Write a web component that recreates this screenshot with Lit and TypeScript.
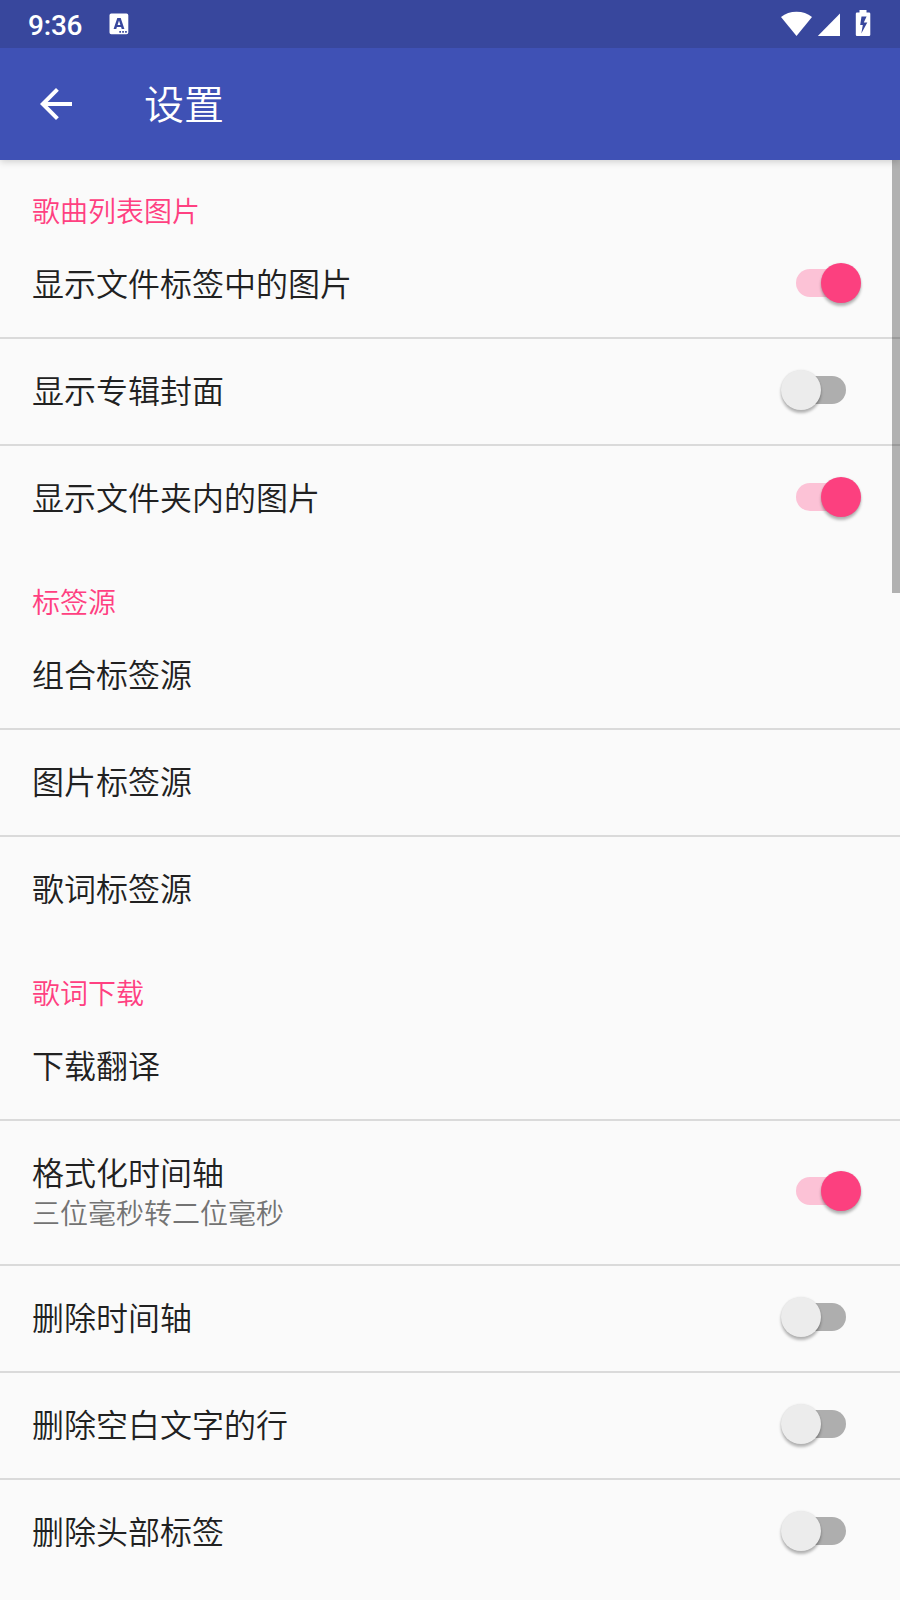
import { LitElement, html, css, nothing } from "lit";
import { customElement, property } from "lit/decorators.js";

interface Pref {
  title: string;
  summary?: string;
  on?: boolean;
}

interface Group {
  name: string;
  items: Pref[];
}

const GROUPS: Group[] = [
  {
    name: "歌曲列表图片",
    items: [
      { title: "显示文件标签中的图片", on: true },
      { title: "显示专辑封面", on: false },
      { title: "显示文件夹内的图片", on: true },
    ],
  },
  {
    name: "标签源",
    items: [{ title: "组合标签源" }, { title: "图片标签源" }, { title: "歌词标签源" }],
  },
  {
    name: "歌词下载",
    items: [
      { title: "下载翻译" },
      { title: "格式化时间轴", summary: "三位毫秒转二位毫秒", on: true },
      { title: "删除时间轴", on: false },
      { title: "删除空白文字的行", on: false },
      { title: "删除头部标签", on: false },
    ],
  },
];

@customElement("toggle-switch")
export class ToggleSwitch extends LitElement {
  @property({ type: Boolean, reflect: true }) on = false;

  static styles = css`
    :host {
      display: flex;
      align-items: center;
      width: 50px;
      height: 28px;
      border-radius: 14px;
      background: #aeaeae;
    }
    .thumb {
      flex: none;
      width: 40px;
      height: 40px;
      margin-left: -15px;
      border-radius: 50%;
      background: #ececec;
      box-shadow: 0 3px 3px rgba(0, 0, 0, 0.28), 0 0 2px rgba(0, 0, 0, 0.1);
    }
    :host([on]) {
      background: #fcc2d6;
    }
    :host([on]) .thumb {
      margin-left: 25px;
      background: #fc407f;
    }
  `;

  render() {
    return html`<div class="thumb"></div>`;
  }
}

@customElement("app-root")
export class AppRoot extends LitElement {
  static styles = css`
    :host {
      display: flex;
      flex-direction: column;
      position: relative;
      width: 900px;
      height: 1600px;
      overflow: hidden;
      background: #fafafa;
      color: #212121;
      font-family: "Noto Sans CJK SC", sans-serif;
      font-weight: 350;
    }
    svg {
      display: block;
      fill: #fff;
    }
    .status {
      flex: none;
      display: flex;
      align-items: flex-start;
      height: 48px;
      box-sizing: border-box;
      padding: 0 29px 0 28px;
      background: #38479d;
      color: #fff;
      position: relative;
      z-index: 2;
    }
    .clock {
      width: 81px;
      font: 500 28px/52px Roboto, sans-serif;
      letter-spacing: -0.2px;
    }
    .spacer {
      flex: 1;
    }
    .bar {
      flex: none;
      display: flex;
      align-items: center;
      height: 112px;
      padding-left: 40px;
      box-sizing: border-box;
      background: #3f51b5;
      color: #fff;
      box-shadow: 0 2px 7px rgba(0, 0, 0, 0.17);
      z-index: 1;
    }
    .title {
      margin-left: 72px;
      padding-bottom: 4px;
      font-size: 40px;
      line-height: 56px;
    }
    .list {
      flex: none;
    }
    .category {
      height: 72px;
      box-sizing: border-box;
      padding: 30px 32px 0;
      color: #ff4081;
      font-size: 28px;
      line-height: 41px;
    }
    .row {
      display: flex;
      align-items: center;
      justify-content: space-between;
      height: 105px;
      padding: 0 54px 0 32px;
    }
    .row + .row {
      border-top: 2px solid #dadada;
    }
    .row.tall {
      height: 143px;
    }
    .name {
      font-size: 32px;
      line-height: 42px;
      padding-bottom: 5px;
    }
    .tall .name {
      padding: 0;
      line-height: 40px;
    }
    .summary {
      padding: 1px 0 3px;
      font-size: 28px;
      line-height: 40px;
      color: #737373;
    }
    toggle-switch {
      margin-bottom: 3px;
    }
    .scroll {
      position: absolute;
      right: 0;
      top: 160px;
      width: 8px;
      height: 433px;
      background: rgba(0, 0, 0, 0.29);
    }
  `;

  private row(p: Pref) {
    return html`<div class="row ${p.summary ? "tall" : ""}">
      <div>
        <div class="name">${p.title}</div>
        ${p.summary ? html`<div class="summary">${p.summary}</div>` : nothing}
      </div>
      ${p.on === undefined ? nothing : html`<toggle-switch ?on=${p.on}></toggle-switch>`}
    </div>`;
  }

  render() {
    return html`
      <div class="status">
        <div class="clock">9:36</div>
        <svg width="20" height="48" viewBox="0 0 20 48">
          <path
            fill-rule="evenodd"
            d="M2.300 13.500h15.200a1.800 1.800 0 0 1 1.800 1.800v17.200a1.800 1.800 0 0 1-1.800 1.800h-15.200a1.800 1.800 0 0 1-1.800-1.800v-17.200a1.800 1.800 0 0 1 1.800-1.800zM8.300 18L4.600 29h2.700l.6-2h4.200l.6 2h2.700L11.700 18zM10 20.500l1.400 4.400H8.600zM10.300 31v1.800h1.700v-1.800zM13.200 31v1.800h1.700v-1.800zM16.100 31v1.800h1.700v-1.800z"
          />
        </svg>
        <div class="spacer"></div>
        <svg width="90" height="48" viewBox="781 0 90 48">
          <path d="M796.500 36L781 17Q787.500 11.700 796.500 11.700T812 17z" />
          <path d="M840 13.500V36H817.800z" />
          <path
            fill-rule="evenodd"
            d="M859.500 10h7v2.500h2.500q1.300 0 1.300 1.300V34.700q0 1.300-1.300 1.300h-12q-1.200 0-1.200-1.300V13.800q0-1.300 1.200-1.300h2.500zM861.500 16.500l-1.300 8.500h2.600l-1.500 8.500 6-11h-3.500l2.800-6z"
          />
        </svg>
      </div>
      <div class="bar">
        <svg width="32" height="32" viewBox="4 4 16 16">
          <path d="M20 11H7.830l5.590-5.590L12 4l-8 8 8 8 1.410-1.410L7.830 13H20v-2z" />
        </svg>
        <div class="title">设置</div>
      </div>
      <div class="list">
        ${GROUPS.map(
          (g) => html`<div class="category">${g.name}</div>
            <section>${g.items.map((p) => this.row(p))}</section>`
        )}
      </div>
      <div class="scroll"></div>
    `;
  }
}
